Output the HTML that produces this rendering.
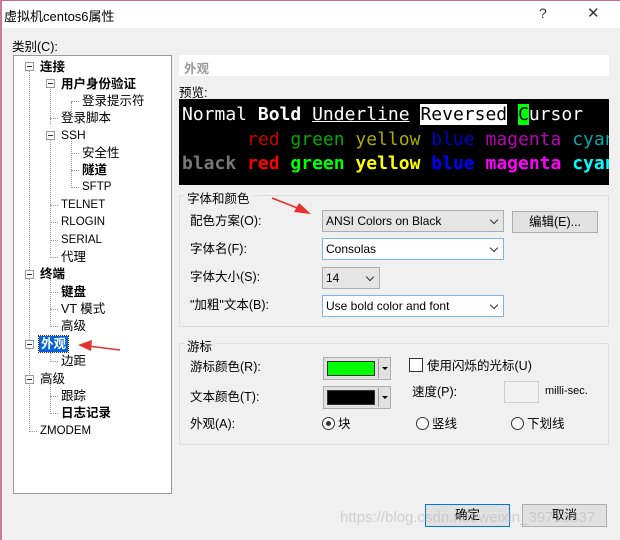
<!DOCTYPE html>
<html><head><meta charset="utf-8"><style>
*{box-sizing:border-box;margin:0;padding:0}
body{width:620px;height:540px;background:#f0f0f0;font-family:"Liberation Sans","Noto Sans CJK SC",sans-serif;font-size:12px;color:#000;position:relative;overflow:hidden}
.abs{position:absolute;white-space:nowrap}
#title{left:0;top:0;width:620px;height:28px;background:#fff;border-top:1px solid #c86a8a;border-left:1px solid #c86a8a}
#lb{left:0;top:0;width:2px;height:540px;background:#c87a96}
#tree{left:13px;top:55px;width:159px;height:439px;background:#fff;border:1px solid #999}
.t{position:absolute;font-size:12.5px;line-height:16px}
.b{font-weight:bold}
.pm{position:absolute;width:9px;height:9px;border:1px solid #999;background:#fff}
.pm:after{content:"";position:absolute;left:1px;top:3px;width:5px;height:1px;background:#333}
.dv{position:absolute;border-left:1px dotted #999}
.dh{position:absolute;border-top:1px dotted #999}
.grp{position:absolute;border:1px solid #dcdcdc;border-radius:2px}
.gl{position:absolute;background:#f0f0f0;padding:0 3px;font-size:12.5px}
.cb{position:absolute;background:#e5e5e5;border:1px solid #adadad;font-size:12px;padding:0 3px;line-height:20px}
.cb.w{background:#fff;border-color:#7eb4ea}
.cb:after{content:"";position:absolute;right:6px;top:6px;width:5px;height:5px;border-right:1px solid #333;border-bottom:1px solid #333;transform:rotate(45deg)}
.btn{position:absolute;background:#e1e1e1;border:1px solid #adadad;text-align:center;font-size:12.5px;line-height:20px}
.pv{font-family:"DejaVu Sans Mono",monospace;font-size:18px;line-height:24px;position:absolute;left:3px;white-space:pre}
.rad{position:absolute;width:13px;height:13px;border:1px solid #333;border-radius:50%;background:#fff}
.lab{position:absolute;white-space:nowrap;font-size:12.5px;line-height:16px}
</style></head><body>
<div class="abs" id="title"></div>
<div class="abs" id="lb"></div>
<div class="abs" style="left:4px;top:6px;font-size:13px">虚拟机centos6属性</div>
<div class="abs" style="left:539px;top:5px;font-size:14px;color:#333">?</div>
<div class="abs" style="left:587px;top:4px;font-size:15px;color:#333">✕</div>
<div class="abs" style="left:12px;top:36px;font-size:12.5px">类别(C):</div>

<div class="abs" id="tree">
<div class="dv" style="left:15px;top:11px;height:365px"></div>
<div class="dv" style="left:36px;top:28px;height:40px"></div>
<div class="dv" style="left:57px;top:46px;height:10px"></div>
<div class="dv" style="left:57px;top:82px;height:50px"></div>
<div class="dv" style="left:36px;top:81px;height:118px"></div>
<div class="dv" style="left:36px;top:219px;height:52px"></div>
<div class="dv" style="left:36px;top:289px;height:17px"></div>
<div class="dv" style="left:36px;top:324px;height:34px"></div>
<div class="dh" style="left:36px;top:62px;width:8px"></div>
<div class="dh" style="left:57px;top:45px;width:8px"></div>
<div class="dh" style="left:57px;top:97px;width:8px"></div>
<div class="dh" style="left:57px;top:114px;width:8px"></div>
<div class="dh" style="left:57px;top:131px;width:8px"></div>
<div class="dh" style="left:36px;top:149px;width:8px"></div>
<div class="dh" style="left:36px;top:166px;width:8px"></div>
<div class="dh" style="left:36px;top:184px;width:8px"></div>
<div class="dh" style="left:36px;top:201px;width:8px"></div>
<div class="dh" style="left:36px;top:236px;width:8px"></div>
<div class="dh" style="left:36px;top:253px;width:8px"></div>
<div class="dh" style="left:36px;top:270px;width:8px"></div>
<div class="dh" style="left:36px;top:305px;width:8px"></div>
<div class="dh" style="left:36px;top:340px;width:8px"></div>
<div class="dh" style="left:36px;top:357px;width:8px"></div>
<div class="dh" style="left:15px;top:375px;width:8px"></div>
<div class="pm" style="left:11px;top:6px"></div>
<div class="pm" style="left:32px;top:23px"></div>
<div class="pm" style="left:32px;top:75px"></div>
<div class="pm" style="left:11px;top:214px"></div>
<div class="pm" style="left:11px;top:284px"></div>
<div class="pm" style="left:11px;top:319px"></div>
<div class="t b" style="left:26px;top:3px">连接</div>
<div class="t b" style="left:47px;top:20px">用户身份验证</div>
<div class="t" style="left:68px;top:37px">登录提示符</div>
<div class="t" style="left:47px;top:54px">登录脚本</div>
<div class="t" style="left:47px;top:71px;font-size:12px">SSH</div>
<div class="t" style="left:68px;top:89px">安全性</div>
<div class="t b" style="left:68px;top:106px">隧道</div>
<div class="t" style="left:68px;top:123px;font-size:11.5px">SFTP</div>
<div class="t" style="left:47px;top:141px;font-size:11.5px">TELNET</div>
<div class="t" style="left:47px;top:158px;font-size:11.5px">RLOGIN</div>
<div class="t" style="left:47px;top:176px;font-size:11.5px">SERIAL</div>
<div class="t" style="left:47px;top:193px">代理</div>
<div class="t b" style="left:26px;top:210px">终端</div>
<div class="t b" style="left:47px;top:228px">键盘</div>
<div class="t" style="left:47px;top:245px">VT 模式</div>
<div class="t" style="left:47px;top:262px">高级</div>
<div class="t b" style="left:25px;top:280px;background:#0a63d6;color:#fff;padding:0 2px;outline:1px dotted #333">外观</div>
<div class="t" style="left:47px;top:297px">边距</div>
<div class="t" style="left:26px;top:315px">高级</div>
<div class="t" style="left:47px;top:332px">跟踪</div>
<div class="t b" style="left:47px;top:349px">日志记录</div>
<div class="t" style="left:26px;top:367px;font-size:11.5px">ZMODEM</div>
</div>

<div class="abs" style="left:179px;top:55px;width:430px;height:21px;background:#fff;color:#999;font-weight:bold;font-size:12.5px;padding:3px 5px">外观</div>
<div class="abs" style="left:179px;top:82px;font-size:12.5px">预览:</div>
<div class="abs" style="left:179px;top:99px;width:430px;height:86px;background:#000;overflow:hidden">
<div class="pv" style="top:4px;color:#fff">Normal <b>Bold</b> <u>Underline</u> <span style="background:#fff;color:#000">Reversed</span> <span style="background:#0f0;color:#000">C</span>ursor</div>
<div class="pv" style="top:29px">      <span style="color:#c00">red</span> <span style="color:#0a0">green</span> <span style="color:#aa0">yellow</span> <span style="color:#00c">blue</span> <span style="color:#b0b">magenta</span> <span style="color:#0aa">cyan</span></div>
<div class="pv" style="top:53px;font-weight:bold"><span style="color:#777">black</span> <span style="color:#f00">red</span> <span style="color:#0f0">green</span> <span style="color:#ff0">yellow</span> <span style="color:#00f">blue</span> <span style="color:#f0f">magenta</span> <span style="color:#0ff">cyan</span></div>
</div>

<div class="grp" style="left:179px;top:195px;width:430px;height:132px"></div>
<div class="gl" style="left:184px;top:188px">字体和颜色</div>
<div class="lab" style="left:190px;top:213px">配色方案(O):</div>
<div class="cb" style="left:322px;top:210px;width:182px;height:22px">ANSI Colors on Black</div>
<div class="btn" style="left:512px;top:211px;width:86px;height:22px">编辑(E)...</div>
<div class="lab" style="left:190px;top:241px">字体名(F):</div>
<div class="cb w" style="left:322px;top:238px;width:182px;height:22px">Consolas</div>
<div class="lab" style="left:190px;top:269px">字体大小(S):</div>
<div class="cb" style="left:322px;top:267px;width:58px;height:22px">14</div>
<div class="lab" style="left:190px;top:297px">"加粗"文本(B):</div>
<div class="cb w" style="left:322px;top:295px;width:182px;height:22px">Use bold color and font</div>

<div class="grp" style="left:179px;top:343px;width:430px;height:102px"></div>
<div class="gl" style="left:184px;top:336px">游标</div>
<div class="lab" style="left:190px;top:359px">游标颜色(R):</div>
<div class="abs" style="left:323px;top:357px;width:68px;height:23px;background:#e1e1e1;border:1px solid #adadad"><div style="position:absolute;left:3px;top:3px;width:48px;height:15px;background:#0f0;border:1px solid #333"></div><div style="position:absolute;left:54px;top:1px;height:19px;border-left:1px solid #999"></div><div style="position:absolute;left:58px;top:9px;border:3px solid transparent;border-top:3px solid #000"></div></div>
<div class="lab" style="left:190px;top:389px">文本颜色(T):</div>
<div class="abs" style="left:323px;top:386px;width:68px;height:23px;background:#e1e1e1;border:1px solid #adadad"><div style="position:absolute;left:3px;top:3px;width:48px;height:15px;background:#000;border:1px solid #333"></div><div style="position:absolute;left:54px;top:1px;height:19px;border-left:1px solid #999"></div><div style="position:absolute;left:58px;top:9px;border:3px solid transparent;border-top:3px solid #000"></div></div>
<div class="abs" style="left:409px;top:358px;width:14px;height:14px;border:1px solid #333;background:#fff"></div>
<div class="lab" style="left:427px;top:358px">使用闪烁的光标(U)</div>
<div class="lab" style="left:412px;top:384px">速度(P):</div>
<div class="abs" style="left:504px;top:381px;width:35px;height:22px;background:#f0f0f0;border:1px solid #ccc"></div>
<div class="abs" style="left:545px;top:385px;font-size:11px">milli-sec.</div>
<div class="lab" style="left:190px;top:416px">外观(A):</div>
<div class="rad" style="left:322px;top:417px"><div style="position:absolute;left:3px;top:3px;width:5px;height:5px;border-radius:50%;background:#333"></div></div>
<div class="lab" style="left:338px;top:416px">块</div>
<div class="rad" style="left:416px;top:417px"></div>
<div class="lab" style="left:432px;top:416px">竖线</div>
<div class="rad" style="left:511px;top:417px"></div>
<div class="lab" style="left:527px;top:416px">下划线</div>

<div class="btn" style="left:425px;top:504px;width:85px;height:23px;border:1px solid #0078d7">确定</div>
<div class="btn" style="left:522px;top:504px;width:85px;height:23px">取消</div>
<div class="abs" style="left:340px;top:509px;font-size:15px;color:rgba(180,180,180,0.55)">https://blog.csdn.net/weixin_39713337</div>

<svg class="abs" style="left:0;top:0" width="620" height="540">
<path d="M272 198 L300 209" stroke="#e83030" stroke-width="1.5"/>
<path d="M311 214 L294 212 L299 203 Z" fill="#e83030"/>
<path d="M120 350 L88 346" stroke="#e83030" stroke-width="1.5"/>
<path d="M78 345 L92 340 L91 351 Z" fill="#e83030"/>
</svg>
</body></html>
